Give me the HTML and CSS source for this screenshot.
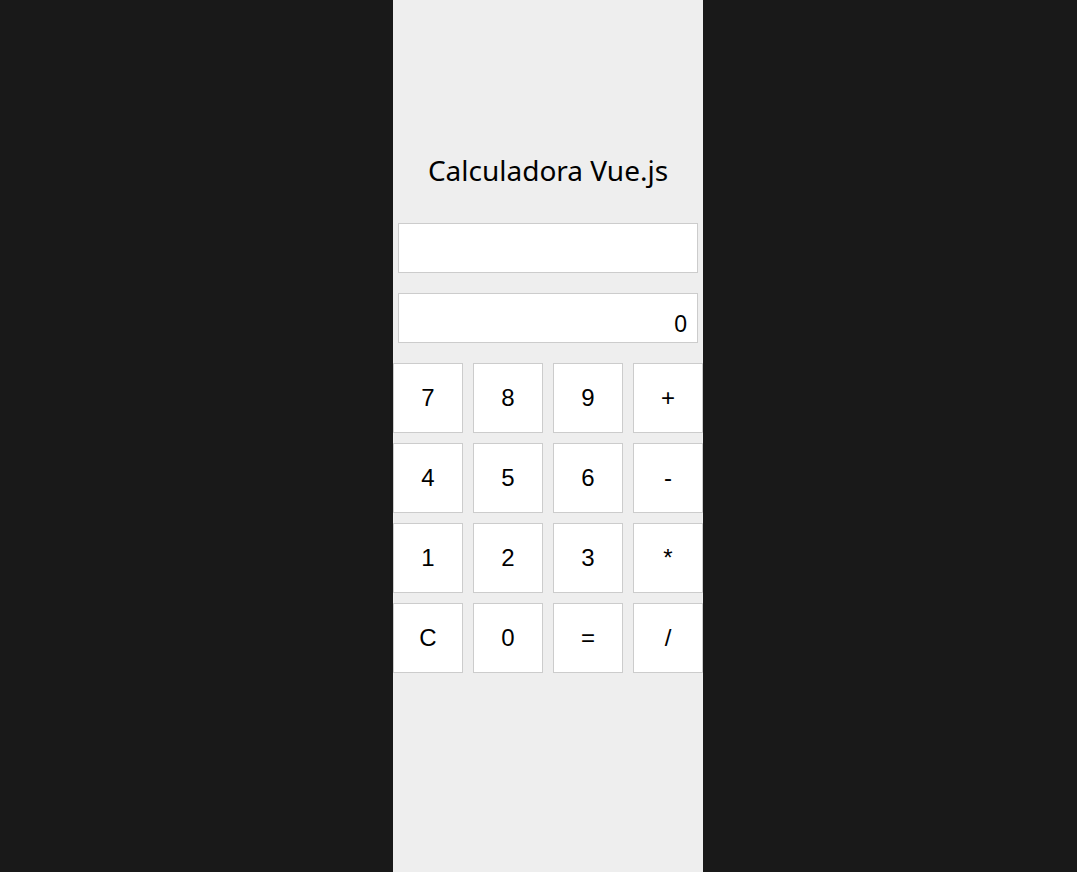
FILE: index.html
```html
<!DOCTYPE html>
<html lang="pt">
<head>
<meta charset="utf-8">
<title>Calculadora Vue.js</title>
<link rel="stylesheet" href="styles.css">
</head>
<body>
<div class="app">
  <h1 class="title">Calculadora Vue.js</h1>
  <div class="display"></div>
  <div class="display result">0</div>
  <div class="keys">
    <button class="key">7</button>
    <button class="key">8</button>
    <button class="key">9</button>
    <button class="key">+</button>
    <button class="key">4</button>
    <button class="key">5</button>
    <button class="key">6</button>
    <button class="key">-</button>
    <button class="key">1</button>
    <button class="key">2</button>
    <button class="key">3</button>
    <button class="key">*</button>
    <button class="key">C</button>
    <button class="key">0</button>
    <button class="key">=</button>
    <button class="key">/</button>
  </div>
</div>
</body>
</html>
```
FILE: styles.css
```css
html, body {
  margin: 0;
  height: 100%;
}
body {
  background: #191919;
}
.app {
  box-sizing: border-box;
  width: 310px;
  min-height: 100%;
  margin-left: calc(50% - 145.5px);
  background: #eeeeee;
  padding-top: 149px;
  display: flex;
  flex-direction: column;
  align-items: center;
}
.title {
  margin: 0;
  height: 42px;
  line-height: 42px;
  font-family: "Noto Sans", "Open Sans", sans-serif;
  font-weight: 400;
  font-size: 28px;
  color: #000;
}
.display {
  box-sizing: border-box;
  width: 300px;
  height: 50px;
  margin-top: 20px;
  background: #fff;
  border: 1px solid #cccccc;
  font-family: "Liberation Sans", Arial, sans-serif;
  font-size: 23px;
  text-align: right;
  padding: 17px 10px 0;
  line-height: 26px;
}
.title + .display {
  margin-top: 32px;
}
.keys {
  margin-top: 20px;
  display: grid;
  grid-template-columns: repeat(4, 70px);
  grid-auto-rows: 70px;
  gap: 10px;
}
.key {
  box-sizing: border-box;
  width: 70px;
  height: 70px;
  margin: 0;
  padding: 0;
  background: #fff;
  border: 1px solid #cccccc;
  font-family: "Liberation Sans", Arial, sans-serif;
  font-size: 24px;
  color: #000;
}
```
